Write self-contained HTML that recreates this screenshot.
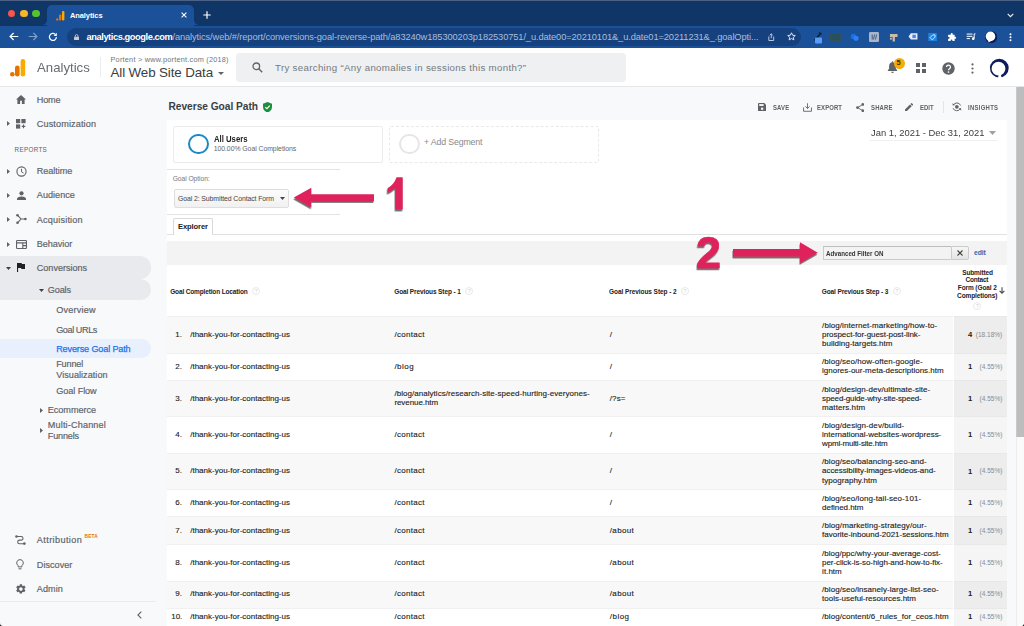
<!DOCTYPE html>
<html>
<head>
<meta charset="utf-8">
<title>Analytics</title>
<style>
*{box-sizing:border-box;margin:0;padding:0}
html,body{width:1024px;height:626px;overflow:hidden;background:#f8f9fa;font-family:"Liberation Sans",sans-serif;color:#222}
.abs,.abs-all *{position:absolute}
#root{position:relative;width:1024px;height:626px;overflow:hidden}
#root div,#root span,#root svg{position:absolute;white-space:nowrap}
.t{line-height:1;transform-origin:0 50%}
/* browser chrome */
#tabbar{left:0;top:0;width:1024px;height:26px;background:#103567}
#tab{left:47px;top:5px;width:147px;height:22px;background:#1b5198;border-radius:5px 5px 0 0}
#toolbar{left:0;top:25.500px;width:1024px;height:22.500px;background:#1b5198}
#urlpill{left:67px;top:28px;width:734px;height:18px;border-radius:9px;background:#15417e}
/* GA header */
#gahead{left:0;top:48px;width:1024px;height:39px;background:#fff;border-bottom:1px solid #e4e6e8}
#search{left:236px;top:53px;width:390px;height:29px;background:#eef0f2;border-radius:4px}
/* sidebar */
.nav{font-size:9.1px;color:#5f6368;margin-top:.8px;-webkit-text-stroke:.18px #5f6368}
/* content */
#panel{left:166.500px;top:120px;width:840.500px;height:520px;background:#fff}
.row{left:167px;width:840px}
.act{font-size:6.600px;font-weight:bold;color:#5f6368;transform:scaleX(.9)}
.cell{font-size:8px;color:#222;-webkit-text-stroke:.12px #222}
.th{font-size:6.500px;font-weight:bold;color:#222}
.pct{font-size:6.500px;color:#8a8a8a}
</style>
</head>
<body>
<div id="root">

<!-- ===== browser chrome ===== -->
<div id="tabbar"></div>
<div style="left:0;top:0;width:1024px;height:1px;background:#4b6286"></div>
<div id="tab"></div>
<svg style="left:42px;top:20px" width="5" height="5" viewBox="0 0 5 5"><path d="M5 0V5H0A5 5 0 0 0 5 0z" fill="#1b5198"/></svg><svg style="left:194px;top:20px" width="5" height="5" viewBox="0 0 5 5"><path d="M0 0V5H5A5 5 0 0 1 0 0z" fill="#1b5198"/></svg>
<div id="toolbar"></div>
<div id="urlpill"></div>
<!-- traffic lights -->
<div style="left:7.8px;top:9.6px;width:7.6px;height:7.6px;border-radius:50%;background:#f2564d"></div>
<div style="left:20px;top:9.6px;width:7.6px;height:7.6px;border-radius:50%;background:#f5b829"></div>
<div style="left:32.2px;top:9.6px;width:7.6px;height:7.6px;border-radius:50%;background:#55c22f"></div>
<!-- favicon -->
<svg style="left:56px;top:11px" width="9" height="10" viewBox="0 0 9 10"><rect x="6" y="0" width="2.4" height="9.6" rx="1" fill="#f9ab00"/><rect x="3" y="3.4" width="2.4" height="6.2" rx="1" fill="#e37400"/><circle cx="1.2" cy="8.4" r="1.2" fill="#e37400"/></svg>
<div class="t" style="left:70px;top:11.700px;font-size:7.500px;color:#fff;font-weight:bold;letter-spacing:-.1px">Analytics</div>
<svg style="left:181.300px;top:12px" width="6" height="6" viewBox="0 0 6 6"><path d="M.6.6l4.8 4.8M5.4.6L.6 5.4" stroke="#fff" stroke-width="1.1" fill="none"/></svg>
<svg style="left:203px;top:11px" width="8" height="8" viewBox="0 0 8 8"><path d="M4 .3v7.4M.3 4h7.4" stroke="#fff" stroke-width="1.2" fill="none"/></svg>
<svg style="left:1007px;top:13px" width="7" height="5" viewBox="0 0 7 5"><path d="M.7.8l2.8 2.8L6.3.8" stroke="#e8eef8" stroke-width="1.2" fill="none"/></svg>
<!-- nav buttons -->
<svg style="left:9px;top:32px" width="10" height="9" viewBox="0 0 10 9"><path d="M9.3 4.5H1.2M4.6 1L1.1 4.5 4.6 8" stroke="#fff" stroke-width="1.2" fill="none"/></svg>
<svg style="left:28px;top:32px" width="10" height="9" viewBox="0 0 10 9"><path d="M.7 4.5h8.1M5.4 1l3.5 3.5L5.4 8" stroke="#7f9fcc" stroke-width="1.2" fill="none"/></svg>
<svg style="left:48px;top:31.5px" width="10" height="10" viewBox="0 0 10 10"><path d="M8.4 5A3.5 3.5 0 1 1 7.3 2.4" stroke="#fff" stroke-width="1.25" fill="none"/><path d="M8.8.8v3.1H5.7z" fill="#fff"/></svg>
<!-- lock -->
<svg style="left:74px;top:33.600px" width="5.200" height="6.800" viewBox="0 0 6 8"><rect x="0" y="3.2" width="6" height="4.600" rx=".7" fill="#c6cad2"/><path d="M1.400 3.400V2.300a1.600 1.600 0 0 1 3.200 0v1.100" stroke="#c6cad2" stroke-width="1" fill="none"/></svg>
<div class="t" id="url" style="left:86.5px;top:32.5px;font-size:9.3px;color:#a9bddb;letter-spacing:-.11px"><span style="position:static;color:#fff;font-weight:bold;letter-spacing:-.43px">analytics.google.com</span>/analytics/web/#/report/conversions-goal-reverse-path/a83240w185300203p182530751/_u.date00=20210101&amp;_u.date01=20211231&amp;_.goalOpti...</div>
<!-- url bar right icons -->
<svg style="left:768px;top:32.500px" width="6.500" height="8.500" viewBox="0 0 8 10"><path d="M1 4v5h6V4M4 6.300V.9M2.200 2.500L4 .8l1.800 1.700" stroke="#c9d5e8" stroke-width="1.100" fill="none"/></svg>
<svg style="left:786.500px;top:32.300px" width="9" height="9" viewBox="0 0 10 10"><path d="M5 .9l1.250 2.700 2.950.3-2.200 2 .62 2.900L5 7.300 2.380 8.800 3 5.900.8 3.900l2.950-.3z" stroke="#dfe7f3" stroke-width="1.100" fill="none"/></svg>
<!-- extensions -->
<svg style="left:812px;top:31px" width="12" height="13" viewBox="0 0 12 13"><path d="M2 9l5-6 1.2 1L3.4 10z" fill="#0b1a33"/><path d="M7.2 1.6l2.2 1.9" stroke="#0b1a33" stroke-width="1.6"/><rect x="3" y="6.4" width="7" height="6" rx=".8" fill="#5b9bf8"/></svg>
<svg style="left:830px;top:33px" width="11" height="8" viewBox="0 0 11 8"><rect x=".6" y=".6" width="9.8" height="6.8" rx="1" stroke="#3a4f52" stroke-width="1.2" fill="#25525f"/></svg>
<svg style="left:849.500px;top:32.500px" width="9.500" height="8.500" viewBox="0 0 11 10"><circle cx="4" cy="4" r="3.200" fill="#1d6fe0"/><circle cx="7" cy="6.200" r="3" fill="#2a80f5"/></svg>
<svg style="left:869px;top:32px" width="10" height="10" viewBox="0 0 10 10"><rect width="10" height="10" rx="1.3" fill="#a9b6c9"/><path d="M3.2 2.5v5M5.6 2.5L4.4 7.5M7.6 2.5L6.4 7.5" stroke="#38557f" stroke-width=".9"/></svg>
<svg style="left:888.500px;top:32.500px" width="9.500" height="9.500" viewBox="0 0 10 10"><path d="M1 1h8v3.200H6.200V9H3.800V4.200H1z" fill="#c9bca6"/><rect x="1" y="5" width="2" height="2" fill="#c9bca6"/></svg>
<svg style="left:908px;top:33.200px" width="10" height="6.800" viewBox="0 0 11 8"><path d="M3 .3h7.700v7.400H3L.3 4z" fill="#e6eefc"/><rect x="4.800" y="2" width="4" height="4" fill="#4a86e0"/></svg>
<svg style="left:928px;top:32.600px" width="9.200" height="8.600" viewBox="0 0 10 10"><rect width="10" height="10" rx=".6" fill="#1e84e4"/><path d="M5.200 2.200h2.600v2.600L4.600 8 2 5.400z" stroke="#fff" stroke-width=".9" fill="none"/></svg>
<svg style="left:947px;top:32.700px" width="9.500" height="9" viewBox="0 0 10 10"><path d="M3.900 1.200a1.100 1.100 0 0 1 2.200 0V2H8.200v2.200h.6a1.100 1.100 0 0 1 0 2.200h-.6V9H5.800v-.7a1 1 0 0 0-2 0V9H1V6.400h.7a1 1 0 0 0 0-2H1V2h2.900z" fill="#fff"/></svg>
<svg style="left:966.300px;top:32.800px" width="10" height="7.500" viewBox="0 0 11 9"><path d="M.3 1.300h7M.3 4h7M.3 6.700h4" stroke="#fff" stroke-width="1.200"/><path d="M9.300 1v5.200" stroke="#fff" stroke-width="1.200"/><path d="M9.300 1h1.500" stroke="#fff" stroke-width="1.200"/><circle cx="8.200" cy="6.800" r="1.600" fill="#fff"/></svg>
<svg style="left:984.800px;top:31.300px" width="12.200" height="12.200" viewBox="0 0 12.200 12.200"><circle cx="6.100" cy="6.100" r="6.100" fill="#0d1d5c"/><circle cx="5.500" cy="5.400" r="4.800" fill="#fff"/><path d="M2 7.500L3.800 11.600 6.500 9.500z" fill="#fff"/></svg>
<svg style="left:1008.700px;top:32.500px" width="3" height="9" viewBox="0 0 3 9"><circle cx="1.500" cy="1.200" r="1" fill="#fff"/><circle cx="1.500" cy="4.200" r="1" fill="#fff"/><circle cx="1.500" cy="7.200" r="1" fill="#fff"/></svg>

<!-- ===== GA header ===== -->
<div id="gahead"></div>
<svg style="left:10px;top:59px" width="16" height="18" viewBox="0 0 16 18"><rect x="10.6" y="0" width="4.6" height="17.6" rx="2.3" fill="#f9ab00"/><rect x="5" y="6.4" width="4.6" height="11.2" rx="2.3" fill="#e37400"/><circle cx="2.3" cy="15.3" r="2.3" fill="#e37400"/></svg>
<div class="t" style="left:37.300px;top:61.800px;font-size:12.400px;color:#676c71;--sw:52.800px;transform:scaleX(1.0647)">Analytics</div>
<div style="left:99.500px;top:56.500px;width:1px;height:20.500px;background:#ebedef"></div>
<div class="t" style="left:110.5px;top:56px;font-size:7.3px;color:#70757a;letter-spacing:.23px">Portent &gt; www.portent.com (2018)</div>
<div class="t" style="left:110.5px;top:66px;font-size:13.4px;color:#3c4043;letter-spacing:-.13px">All Web Site Data</div>
<svg style="left:218px;top:72px" width="6" height="3" viewBox="0 0 6 3"><path d="M0 0h6L3 3z" fill="#5f6368"/></svg>
<div id="search"></div>
<svg style="left:252px;top:62px" width="11" height="11" viewBox="0 0 11 11"><circle cx="4.3" cy="4.3" r="3.3" stroke="#5f6368" stroke-width="1.3" fill="none"/><path d="M6.8 6.8l3.4 3.4" stroke="#5f6368" stroke-width="1.4"/></svg>
<div class="t" style="left:275px;top:62.5px;font-size:9.700px;color:#757a7f;letter-spacing:.32px">Try searching &ldquo;Any anomalies in sessions this month?&rdquo;</div>
<!-- right icons -->
<svg style="left:887px;top:61px" width="11" height="13" viewBox="0 0 11 13"><path d="M5.5 1.2c-2 0-3.4 1.5-3.4 3.6v3L.8 9.3v.7h9.4v-.7L8.9 7.8v-3c0-2.1-1.4-3.6-3.4-3.600z" fill="#5f6368"/><rect x="4.7" y=".2" width="1.6" height="1.6" rx=".8" fill="#5f6368"/><path d="M4.2 10.8a1.3 1.3 0 0 0 2.600 0z" fill="#5f6368"/></svg>
<div style="left:893.5px;top:57.5px;width:11px;height:11px;border-radius:50%;background:#f9ab00"></div>
<div class="t" style="left:896.4px;top:59.300px;font-size:7.400px;color:#3c2e00;font-weight:bold">5</div>
<svg style="left:916px;top:63px" width="10" height="10" viewBox="0 0 10 10"><rect x="0" y="0" width="4" height="4" fill="#5f6368"/><rect x="6" y="0" width="4" height="4" fill="#5f6368"/><rect x="0" y="6" width="4" height="4" fill="#5f6368"/><rect x="6" y="6" width="4" height="4" fill="#5f6368"/></svg>
<svg style="left:942px;top:61.500px" width="13" height="13" viewBox="0 0 13 13"><circle cx="6.5" cy="6.5" r="6.2" fill="#5f6368"/><path d="M4.500 5.100a2 2 0 1 1 3 1.700c-.7.400-1 .800-1 1.500" stroke="#fff" stroke-width="1.300" fill="none"/><circle cx="6.500" cy="10" r=".85" fill="#fff"/></svg>
<svg style="left:971px;top:62.500px" width="3" height="11" viewBox="0 0 3 11"><circle cx="1.5" cy="1.400" r="1.100" fill="#5f6368"/><circle cx="1.5" cy="5.500" r="1.100" fill="#5f6368"/><circle cx="1.5" cy="9.600" r="1.100" fill="#5f6368"/></svg>
<svg style="left:989px;top:57.500px" width="21" height="21" viewBox="0 0 21 21"><path fill-rule="evenodd" fill="#0d1d5c" d="M10.300 .700a9.400 9.400 0 1 1 0 18.800a9.400 9.400 0 1 1 0 -18.800zM9.500 3.800a6.900 6.900 0 1 0 0 13.800a6.900 6.900 0 1 0 0 -13.800z"/><path d="M10.600 12l-1.800 9h4.200z" fill="#fff"/></svg>

<!-- ===== sidebar ===== -->
<div style="left:0;top:256.300px;width:151px;height:22.700px;background:#e8eaed;border-radius:0 11.300px 11.300px 0"></div>
<div style="left:0;top:279px;width:151px;height:21px;background:#e8eaed;border-radius:0 10.500px 10.500px 0"></div>
<div style="left:0;top:339px;width:151px;height:18.500px;background:#e8f0fe;border-radius:0 9.250px 9.250px 0"></div>
<svg style="left:15.500px;top:94.500px" width="10" height="9" viewBox="0 0 10 9"><path d="M5 0L0 4.500h1.400V9h2.700V5.800h1.800V9h2.700V4.500H10z" fill="#5f6368"/></svg>
<div class="t nav" style="left:36.8px;top:95.050px;--w:23.8px;letter-spacing:-0.155px">Home</div>
<svg style="left:6.800000000000001px;top:121.1px" width="3" height="5" viewBox="0 0 3 5"><path d="M0 0l3 2.500L0 5z" fill="#5f6368"/></svg>
<svg style="left:16px;top:119px" width="10" height="10" viewBox="0 0 10 10"><rect x="0" y="0" width="4.200" height="4.200" fill="#5f6368"/><rect x="5.400" y="0" width="4.200" height="4.200" fill="#5f6368"/><rect x="0" y="5.400" width="4.200" height="4.200" fill="#5f6368"/><path d="M7.500 5.600v3.600M5.700 7.400h3.600" stroke="#5f6368" stroke-width="1.100"/></svg>
<div class="t nav" style="left:36.8px;top:118.85px;--w:59.2px;letter-spacing:0.131px">Customization</div>
<div class="t" style="left:14.600px;top:146.600px;font-size:6.300px;color:#5f6368;--w:32.200px;letter-spacing:0.312px">REPORTS</div>
<svg style="left:6.800000000000001px;top:168.5px" width="3" height="5" viewBox="0 0 3 5"><path d="M0 0l3 2.500L0 5z" fill="#5f6368"/></svg>
<svg style="left:15.500px;top:165.800px" width="11" height="11" viewBox="0 0 11 11"><circle cx="5.500" cy="5.500" r="4.600" stroke="#5f6368" stroke-width="1.100" fill="none"/><path d="M5.500 2.800v3l2 1.200" stroke="#5f6368" stroke-width="1" fill="none"/></svg>
<div class="t nav" style="left:36.8px;top:166.25px;--w:35.6px;letter-spacing:-0.042px">Realtime</div>
<svg style="left:6.800000000000001px;top:192.7px" width="3" height="5" viewBox="0 0 3 5"><path d="M0 0l3 2.500L0 5z" fill="#5f6368"/></svg>
<svg style="left:16.500px;top:190.500px" width="9" height="9" viewBox="0 0 9 9"><circle cx="4.500" cy="2.300" r="2.100" fill="#5f6368"/><path d="M0 9V7.600C0 6.200 3 5.400 4.500 5.400S9 6.200 9 7.600V9z" fill="#5f6368"/></svg>
<div class="t nav" style="left:36.8px;top:190.45px;--w:38.1px;letter-spacing:0.025px">Audience</div>
<svg style="left:6.800000000000001px;top:217.0px" width="3" height="5" viewBox="0 0 3 5"><path d="M0 0l3 2.500L0 5z" fill="#5f6368"/></svg>
<svg style="left:15.500px;top:214.300px" width="11" height="10" viewBox="0 0 11 10"><path d="M1.500 1.200L5 5 1.500 8.800M5 5h4.500" stroke="#5f6368" stroke-width="1.100" fill="none"/><circle cx="1.500" cy="1.300" r="1.300" fill="#5f6368"/><circle cx="1.500" cy="8.700" r="1.300" fill="#5f6368"/><circle cx="9.400" cy="5" r="1.300" fill="#5f6368"/></svg>
<div class="t nav" style="left:36.8px;top:214.75px;--w:45.8px;letter-spacing:0.182px">Acquisition</div>
<svg style="left:6.800000000000001px;top:241.5px" width="3" height="5" viewBox="0 0 3 5"><path d="M0 0l3 2.500L0 5z" fill="#5f6368"/></svg>
<svg style="left:15.500px;top:239.500px" width="11" height="9" viewBox="0 0 11 9"><rect x=".55" y=".55" width="9.900" height="7.900" rx=".8" stroke="#5f6368" stroke-width="1.100" fill="none"/><path d="M.5 2.900h10M6.800 2.900v5.600M6.800 5.600h3.700" stroke="#5f6368" stroke-width="1.100"/></svg>
<div class="t nav" style="left:36.8px;top:239.25px;--w:35.5px;letter-spacing:-0.058px">Behavior</div>
<svg style="left:5.800000000000001px;top:266.5px" width="5" height="3" viewBox="0 0 5 3"><path d="M0 0h5L2.500 3z" fill="#3c4043"/></svg>
<svg style="left:17px;top:263.300px" width="8" height="9" viewBox="0 0 8 9"><path d="M0 0h4.600l.3.900H8v5H4.400l-.3-.9H1.100V9H0z" fill="#202124"/></svg>
<div class="t nav" style="left:36.8px;top:263.25px;--w:50.3px;letter-spacing:-0.025px">Conversions</div>
<svg style="left:39.0px;top:289.0px" width="5" height="3" viewBox="0 0 5 3"><path d="M0 0h5L2.500 3z" fill="#3c4043"/></svg>
<div class="t nav" style="left:47.8px;top:285.55px;--w:23.2px;letter-spacing:-0.141px">Goals</div>
<div class="t nav" style="left:56.2px;top:305.05px;--w:39.4px;letter-spacing:0.213px">Overview</div>
<div class="t nav" style="left:56.2px;top:324.75px;--w:41.2px;letter-spacing:-0.411px">Goal URLs</div>
<div class="t nav" style="left:56.2px;top:343.85px;color:#1a73e8;-webkit-text-stroke:.25px #1a73e8;--w:74.5px;letter-spacing:-0.146px">Reverse Goal Path</div>
<div class="t nav" style="left:56.2px;top:359.55px;--w:27.1px;letter-spacing:-0.142px">Funnel</div>
<div class="t nav" style="left:56.2px;top:370.15px;--w:51.4px;letter-spacing:0.042px">Visualization</div>
<div class="t nav" style="left:56.2px;top:385.85px;--w:40.5px;letter-spacing:-0.055px">Goal Flow</div>
<svg style="left:40.0px;top:407.5px" width="3" height="5" viewBox="0 0 3 5"><path d="M0 0l3 2.500L0 5z" fill="#5f6368"/></svg>
<div class="t nav" style="left:47.8px;top:405.25px;--w:48.2px;letter-spacing:-0.039px">Ecommerce</div>
<svg style="left:40.0px;top:428.0px" width="3" height="5" viewBox="0 0 3 5"><path d="M0 0l3 2.500L0 5z" fill="#5f6368"/></svg>
<div class="t nav" style="left:47.8px;top:420.25px;--w:58px;letter-spacing:0.158px">Multi-Channel</div>
<div class="t nav" style="left:47.8px;top:430.95px;--w:31.3px;letter-spacing:-0.177px">Funnels</div>
<svg style="left:14.500px;top:535px" width="11" height="10" viewBox="0 0 11 10"><path d="M1.600 1.500h4.600a1.800 1.800 0 0 1 0 3.600H4.500a1.800 1.800 0 0 0 0 3.600h4.600" stroke="#5f6368" stroke-width="1.100" fill="none"/><circle cx="1.500" cy="1.500" r="1.300" fill="#5f6368"/><circle cx="9.400" cy="8.600" r="1.300" fill="#5f6368"/></svg>
<div class="t nav" style="left:36.8px;top:535.05px;--w:45px;letter-spacing:0.405px">Attribution</div>
<div class="t" style="left:84.500px;top:534.800px;font-size:4.800px;color:#e8710a;font-weight:bold;letter-spacing:.2px">BETA</div>
<svg style="left:16px;top:559px" width="8" height="11" viewBox="0 0 8 11"><path d="M4 .6a3.300 3.300 0 0 0-1.900 6v1.300h3.800V6.600A3.300 3.300 0 0 0 4 .600z" stroke="#5f6368" stroke-width="1" fill="none"/><path d="M2.500 9.800h3" stroke="#5f6368" stroke-width="1"/></svg>
<div class="t nav" style="left:36.8px;top:559.95px;--w:35.5px;letter-spacing:0.018px">Discover</div>
<svg style="left:14.800px;top:583.200px" width="11.800" height="11.800" viewBox="0 0 24 24"><path fill="#5f6368" d="M19.140 12.940c.04-.3.060-.61.060-.94 0-.32-.02-.64-.07-.94l2.030-1.580a.49.49 0 0 0 .12-.61l-1.920-3.320a.488.488 0 0 0-.59-.22l-2.390.96c-.5-.38-1.030-.7-1.620-.94l-.36-2.540a.484.484 0 0 0-.48-.41h-3.840c-.24 0-.43.170-.47.410l-.36 2.540c-.59.240-1.130.57-1.620.94l-2.390-.96c-.22-.08-.47 0-.59.220L2.740 8.870c-.12.210-.8.470.12.610l2.030 1.580c-.5.300-.9.630-.9.940s.2.640.7.940l-2.030 1.580a.49.49 0 0 0-.12.610l1.920 3.320c.12.220.37.290.59.220l2.390-.96c.5.380 1.030.7 1.620.94l.36 2.540c.5.240.24.410.48.410h3.840c.24 0 .44-.17.470-.41l.36-2.540c.59-.24 1.130-.56 1.620-.94l2.390.96c.22.080.47 0 .59-.22l1.920-3.320c.12-.22.070-.47-.12-.61l-2.010-1.580zM12 15.600c-1.980 0-3.600-1.620-3.600-3.600s1.620-3.600 3.600-3.600 3.600 1.620 3.600 3.600-1.620 3.600-3.600 3.600z"/></svg>
<div class="t nav" style="left:36.8px;top:584.15px;--w:26px;letter-spacing:0.055px">Admin</div>
<div style="left:0;top:601px;width:156px;height:1px;background:#e9ebee"></div>
<svg style="left:137px;top:610.500px" width="5" height="8" viewBox="0 0 5 8"><path d="M4.300.6L.9 4l3.400 3.400" stroke="#5f6368" stroke-width="1.100" fill="none"/></svg>

<!-- ===== content ===== -->
<div class="t" style="left:168.500px;top:101.700px;font-size:10.200px;font-weight:bold;color:#3c4043;--w:89.500px;letter-spacing:-0.033px">Reverse Goal Path</div>
<svg style="left:262.500px;top:101.500px" width="9" height="10.500" viewBox="0 0 9 10.500"><path d="M4.500 0L0 1.800v3.300c0 2.600 1.900 4.600 4.500 5.400C7.100 9.700 9 7.700 9 5.100V1.800z" fill="#1e8e3e"/><path d="M2.300 5.200l1.600 1.500 2.900-3" stroke="#fff" stroke-width="1.100" fill="none"/></svg>
<!-- action bar -->
<svg style="left:757.500px;top:103.200px" width="8.300" height="8.300" viewBox="0 0 9 9"><path d="M0 .9C0 .4.400 0 .9 0h6L9 2.100v6c0 .500-.4.900-.9.900H.9C.4 9 0 8.600 0 8.100z" fill="#5f6368"/><rect x="1.300" y="1.200" width="4.800" height="2" fill="#f8f9fa"/><circle cx="4.500" cy="6.200" r="1.350" fill="#f8f9fa"/></svg>
<div class="t act" style="left:772.800px;top:104.600px;--w:16.200px;letter-spacing:0.177px">SAVE</div>
<svg style="left:802.500px;top:102.500px" width="9" height="9" viewBox="0 0 10 10"><path d="M5 .3v5.600M2.700 3.800L5 6.100l2.300-2.300M.6 5v4.200h8.800V5" stroke="#5f6368" stroke-width="1" fill="none"/></svg>
<div class="t act" style="left:817px;top:104.600px;--w:25px;letter-spacing:0.131px">EXPORT</div>
<svg style="left:856px;top:102.500px" width="8.300" height="9.200" viewBox="0 0 9 10"><path d="M7.300 1.700L1.700 5l5.600 3.300" stroke="#5f6368" stroke-width="1" fill="none"/><circle cx="7.400" cy="1.600" r="1.500" fill="#5f6368"/><circle cx="1.600" cy="5" r="1.500" fill="#5f6368"/><circle cx="7.400" cy="8.400" r="1.500" fill="#5f6368"/></svg>
<div class="t act" style="left:870.500px;top:104.600px;--w:21.500px;letter-spacing:0.199px">SHARE</div>
<svg style="left:905px;top:103.200px" width="8.200" height="8.200" viewBox="0 0 9 9"><path d="M0 7.100V9h1.900l5.500-5.500-1.900-1.900zM8.800 2.100a.5.500 0 0 0 0-.7L7.600.2a.5.500 0 0 0-.7 0l-.9.900 1.900 1.900z" fill="#5f6368"/></svg>
<div class="t act" style="left:920px;top:104.600px;--w:13.600px;letter-spacing:0.027px">EDIT</div>
<div style="left:943px;top:100.500px;width:1px;height:12px;background:#e3e5e8"></div>
<svg style="left:952px;top:102px" width="9.700" height="9.700" viewBox="0 0 10 10"><path d="M1.300 3.200A4.200 4.200 0 0 1 8.900 3.600M8.700 6.800A4.200 4.200 0 0 1 1.100 6.400" stroke="#5f6368" stroke-width="1" fill="none"/><path d="M.3 1.200l.6 2.500 2.400-.7zM9.700 8.800l-.6-2.500-2.400.7z" fill="#5f6368"/><circle cx="5" cy="5" r="1.900" fill="#5f6368"/></svg>
<div class="t act" style="left:968px;top:104.600px;--w:30px;letter-spacing:0.313px">INSIGHTS</div>

<div id="panel"></div>
<!-- date range -->
<div class="t" style="left:871px;top:127.600px;font-size:9.900px;color:#3c4043;--sw:113.400px;transform:scaleX(0.9518)">Jan 1, 2021 - Dec 31, 2021</div>
<svg style="left:988.500px;top:131px" width="7" height="4" viewBox="0 0 7 4"><path d="M0 0h7L3.500 4z" fill="#9aa0a6"/></svg>
<div style="left:870px;top:140px;width:128px;height:1px;background:#f0f0f0"></div>
<!-- segments -->
<div style="left:172.500px;top:125.500px;width:210px;height:37px;background:#fff;border:1px solid #ececec;border-radius:2px"></div>
<div style="left:188px;top:133.800px;width:20.500px;height:20.500px;border-radius:50%;border:2.600px solid #1888c8"></div>
<div class="t" style="left:213.700px;top:135.400px;font-size:9.300px;font-weight:bold;color:#222;--sw:33.500px;transform:scaleX(0.8310)">All Users</div>
<div class="t" style="left:213.700px;top:145.700px;font-size:6.900px;color:#666;--w:82.500px;letter-spacing:-0.060px">100.00% Goal Completions</div>
<div style="left:388.500px;top:125.500px;width:210px;height:37px;background:#fff;border:1px dashed #e9e9e9;border-radius:2px"></div>
<div style="left:399px;top:133.800px;width:20.500px;height:20.500px;border-radius:50%;border:2px solid #e6e6e6"></div>
<div class="t" style="left:424px;top:137.700px;font-size:8.800px;color:#8a8a8a;--w:58.500px;letter-spacing:-0.159px">+ Add Segment</div>
<!-- goal option -->
<div style="left:166.500px;top:169.300px;width:173px;height:1px;background:#e4e4e4"></div>
<div class="t" style="left:172.700px;top:175.500px;font-size:6.700px;color:#777;--w:37px;letter-spacing:-0.050px">Goal Option:</div>
<div style="left:173.500px;top:189.300px;width:115.500px;height:18.300px;background:linear-gradient(#fcfcfc,#f1f1f1);border:1px solid #dedede;border-radius:2px"></div>
<div class="t" style="left:178px;top:195.700px;font-size:6.900px;color:#444;--w:96px;letter-spacing:-0.097px">Goal 2: Submitted Contact Form</div>
<svg style="left:279.500px;top:197px" width="5" height="3" viewBox="0 0 5 3"><path d="M0 0h5L2.500 3z" fill="#444"/></svg>
<div style="left:166.500px;top:214px;width:173px;height:1px;background:#e4e4e4"></div>
<!-- tabs -->
<div style="left:166.500px;top:234.400px;width:840px;height:1px;background:#e1e1e1"></div>
<div style="left:172.500px;top:218px;width:40.500px;height:17.300px;background:#fff;border:1px solid #d9d9d9;border-bottom:none;border-radius:2px 2px 0 0"></div>
<div class="t" style="left:178px;top:222.500px;font-size:7.600px;font-weight:bold;color:#222;--w:30px;letter-spacing:-0.116px">Explorer</div>
<!-- filter bar -->
<div style="left:166.500px;top:241.300px;width:840px;height:23.300px;background:#f3f3f3"></div>
<div style="left:822.500px;top:246.200px;width:128.500px;height:13.500px;background:#f3f3f3;border:1px solid #cbcbcb;border-top-color:#bdbdbd;border-right:none"></div>
<div class="t" style="left:826.300px;top:249.500px;font-size:7px;font-weight:bold;color:#333;--sw:57.500px;transform:scaleX(0.8850)">Advanced Filter ON</div>
<div style="left:950.500px;top:246.200px;width:18px;height:13.500px;background:linear-gradient(#f6f6f6,#e4e4e4);border:1px solid #cbcbcb;border-radius:0 2px 2px 0"></div>
<svg style="left:956.500px;top:250.200px" width="6" height="6" viewBox="0 0 6 6"><path d="M.5.500l5 5M5.500.5l-5 5" stroke="#444" stroke-width="1.100"/></svg>
<div class="t" style="left:974px;top:249.500px;font-size:6.800px;font-weight:bold;color:#1c6cb8;--w:11.800px;letter-spacing:-0.098px">edit</div>

<!-- ===== table ===== -->
<div class="t th" style="left:170.2px;top:289px;--w:77.5px;letter-spacing:-0.147px">Goal Completion Location</div>
<div style="left:252.0px;top:287.3px;width:8px;height:8px;border-radius:50%;border:1px solid #e9e9e9"></div><div class="t" style="left:254.7px;top:288.70px;font-size:5px;color:#cfcfcf">?</div>
<div class="t th" style="left:394.2px;top:289px;--w:66.6px;letter-spacing:-0.114px">Goal Previous Step - 1</div>
<div style="left:465.4px;top:287.3px;width:8px;height:8px;border-radius:50%;border:1px solid #e9e9e9"></div><div class="t" style="left:468.1px;top:288.70px;font-size:5px;color:#cfcfcf">?</div>
<div class="t th" style="left:609.1px;top:289px;--w:67.5px;letter-spacing:-0.071px">Goal Previous Step - 2</div>
<div style="left:680.9px;top:287.3px;width:8px;height:8px;border-radius:50%;border:1px solid #e9e9e9"></div><div class="t" style="left:683.6px;top:288.70px;font-size:5px;color:#cfcfcf">?</div>
<div class="t th" style="left:821.8px;top:289px;--w:66.5px;letter-spacing:-0.119px">Goal Previous Step - 3</div>
<div style="left:892.7px;top:287.3px;width:8px;height:8px;border-radius:50%;border:1px solid #e9e9e9"></div><div class="t" style="left:895.4px;top:288.70px;font-size:5px;color:#cfcfcf">?</div>
<div class="t th" style="left:962.2px;top:269.5px;--w:30.8px;letter-spacing:-0.123px">Submitted</div>
<div class="t th" style="left:965.5px;top:277.4px;--w:23px;letter-spacing:-0.201px">Contact</div>
<div class="t th" style="left:957.8px;top:285.4px;--w:39px;letter-spacing:-0.099px">Form (Goal 2</div>
<div class="t th" style="left:957.1px;top:293.4px;--w:40.3px;letter-spacing:-0.112px">Completions)</div>
<div style="left:973.3px;top:302.3px;width:8px;height:8px;border-radius:50%;border:1px solid #e9e9e9"></div><div class="t" style="left:976.0px;top:303.70px;font-size:5px;color:#cfcfcf">?</div>
<svg style="left:999px;top:287px" width="6" height="7" viewBox="0 0 6 7"><path d="M3 .3v5.800M.6 3.800L3 6.200l2.400-2.400" stroke="#4a4a4a" stroke-width="1.100" fill="none"/></svg>
<div style="left:166.500px;top:315.5px;width:786.500px;height:37.4px;background:#f8f8f8;border-top:1px solid #f0f0f0"></div><div style="left:953.500px;top:315.5px;width:53.500px;height:37.4px;background:#ededed;border-top:1px solid #e8e8e8"></div>
<div class="t cell" style="left:175.300px;top:330.80px;">1.</div>
<div class="t cell" style="left:190.2px;top:330.80px;--w:99.8px;letter-spacing:0.007px">/thank-you-for-contacting-us</div>
<div class="t cell" style="left:394.4px;top:330.80px;--w:30.2px;letter-spacing:0.312px">/contact</div>
<div class="t cell" style="left:609.800px;top:330.80px">/</div>
<div class="t cell" style="left:822.1px;top:321.75px;--w:115.1px;letter-spacing:0.069px">/blog/internet-marketing/how-to-</div>
<div class="t cell" style="left:822.1px;top:330.80px;--w:98.4px;letter-spacing:-0.059px">prospect-for-guest-post-link-</div>
<div class="t cell" style="left:822.1px;top:339.85px;--w:70.3px;letter-spacing:0.002px">building-targets.htm</div>
<div class="t" style="left:968px;top:330.90px;font-size:7.600px;font-weight:bold;color:#222">4</div><div class="t pct" style="left:975.700px;top:331.80px;--w:26.600px;letter-spacing:0.032px">(18.18%)</div>
<div style="left:166.500px;top:352.9px;width:786.500px;height:26.8px;background:#ffffff;border-top:1px solid #f0f0f0"></div><div style="left:953.500px;top:352.9px;width:53.500px;height:26.8px;background:#f5f5f5;border-top:1px solid #e8e8e8"></div>
<div class="t cell" style="left:175.300px;top:362.90px;">2.</div>
<div class="t cell" style="left:190.2px;top:362.90px;--w:99.8px;letter-spacing:0.007px">/thank-you-for-contacting-us</div>
<div class="t cell" style="left:394.4px;top:362.90px;--w:19.2px;letter-spacing:0.460px">/blog</div>
<div class="t cell" style="left:609.800px;top:362.90px">/</div>
<div class="t cell" style="left:822.1px;top:358.37px;--w:100.5px;letter-spacing:0.050px">/blog/seo/how-often-google-</div>
<div class="t cell" style="left:822.1px;top:367.42px;--w:121.5px;letter-spacing:-0.010px">ignores-our-meta-descriptions.htm</div>
<div class="t" style="left:968px;top:363.00px;font-size:7.600px;font-weight:bold;color:#222">1</div><div class="t pct" style="left:979.500px;top:363.90px;--w:23px;letter-spacing:0.039px">(4.55%)</div>
<div style="left:166.500px;top:379.7px;width:786.500px;height:36.7px;background:#f8f8f8;border-top:1px solid #f0f0f0"></div><div style="left:953.500px;top:379.7px;width:53.500px;height:36.7px;background:#ededed;border-top:1px solid #e8e8e8"></div>
<div class="t cell" style="left:175.300px;top:394.65px;">3.</div>
<div class="t cell" style="left:190.2px;top:394.65px;--w:99.8px;letter-spacing:0.007px">/thank-you-for-contacting-us</div>
<div class="t cell" style="left:394.4px;top:390.12px;--w:195.3px;letter-spacing:0.044px">/blog/analytics/research-site-speed-hurting-everyones-</div>
<div class="t cell" style="left:394.4px;top:399.17px;--w:43.7px;letter-spacing:-0.077px">revenue.htm</div>
<div class="t cell" style="left:609.8px;top:394.65px;--w:15.6px;letter-spacing:0.085px">/?s=</div>
<div class="t cell" style="left:822.1px;top:385.60px;--w:108.2px;letter-spacing:0.049px">/blog/design-dev/ultimate-site-</div>
<div class="t cell" style="left:822.1px;top:394.65px;--w:99.7px;letter-spacing:-0.134px">speed-guide-why-site-speed-</div>
<div class="t cell" style="left:822.1px;top:403.70px;--w:43px;letter-spacing:0.077px">matters.htm</div>
<div class="t" style="left:968px;top:394.75px;font-size:7.600px;font-weight:bold;color:#222">1</div><div class="t pct" style="left:979.500px;top:395.65px;--w:23px;letter-spacing:0.039px">(4.55%)</div>
<div style="left:166.500px;top:416.4px;width:786.500px;height:36.3px;background:#ffffff;border-top:1px solid #f0f0f0"></div><div style="left:953.500px;top:416.4px;width:53.500px;height:36.3px;background:#f5f5f5;border-top:1px solid #e8e8e8"></div>
<div class="t cell" style="left:175.300px;top:431.15px;">4.</div>
<div class="t cell" style="left:190.2px;top:431.15px;--w:99.8px;letter-spacing:0.007px">/thank-you-for-contacting-us</div>
<div class="t cell" style="left:394.4px;top:431.15px;--w:30.2px;letter-spacing:0.312px">/contact</div>
<div class="t cell" style="left:609.800px;top:431.15px">/</div>
<div class="t cell" style="left:822.1px;top:422.10px;--w:82.1px;letter-spacing:0.073px">/blog/design-dev/build-</div>
<div class="t cell" style="left:822.1px;top:431.15px;--w:119.2px;letter-spacing:-0.013px">international-websites-wordpress-</div>
<div class="t cell" style="left:822.1px;top:440.20px;--w:65.5px;letter-spacing:-0.189px">wpml-multi-site.htm</div>
<div class="t" style="left:968px;top:431.25px;font-size:7.600px;font-weight:bold;color:#222">1</div><div class="t pct" style="left:979.500px;top:432.15px;--w:23px;letter-spacing:0.039px">(4.55%)</div>
<div style="left:166.500px;top:452.7px;width:786.500px;height:36.3px;background:#f8f8f8;border-top:1px solid #f0f0f0"></div><div style="left:953.500px;top:452.7px;width:53.500px;height:36.3px;background:#ededed;border-top:1px solid #e8e8e8"></div>
<div class="t cell" style="left:175.300px;top:467.45px;">5.</div>
<div class="t cell" style="left:190.2px;top:467.45px;--w:99.8px;letter-spacing:0.007px">/thank-you-for-contacting-us</div>
<div class="t cell" style="left:394.4px;top:467.45px;--w:30.2px;letter-spacing:0.312px">/contact</div>
<div class="t cell" style="left:609.800px;top:467.45px">/</div>
<div class="t cell" style="left:822.1px;top:458.40px;--w:104.6px;letter-spacing:0.052px">/blog/seo/balancing-seo-and-</div>
<div class="t cell" style="left:822.1px;top:467.45px;--w:113.6px;letter-spacing:-0.065px">accessibility-images-videos-and-</div>
<div class="t cell" style="left:822.1px;top:476.50px;--w:54.8px;letter-spacing:0.019px">typography.htm</div>
<div class="t" style="left:968px;top:467.55px;font-size:7.600px;font-weight:bold;color:#222">1</div><div class="t pct" style="left:979.500px;top:468.45px;--w:23px;letter-spacing:0.039px">(4.55%)</div>
<div style="left:166.500px;top:489.0px;width:786.500px;height:27.4px;background:#ffffff;border-top:1px solid #f0f0f0"></div><div style="left:953.500px;top:489.0px;width:53.500px;height:27.4px;background:#f5f5f5;border-top:1px solid #e8e8e8"></div>
<div class="t cell" style="left:175.300px;top:499.30px;">6.</div>
<div class="t cell" style="left:190.2px;top:499.30px;--w:99.8px;letter-spacing:0.007px">/thank-you-for-contacting-us</div>
<div class="t cell" style="left:394.4px;top:499.30px;--w:30.2px;letter-spacing:0.312px">/contact</div>
<div class="t cell" style="left:609.800px;top:499.30px">/</div>
<div class="t cell" style="left:822.1px;top:494.77px;--w:99px;letter-spacing:0.076px">/blog/seo/long-tail-seo-101-</div>
<div class="t cell" style="left:822.1px;top:503.82px;--w:41.3px;letter-spacing:-0.051px">defined.htm</div>
<div class="t" style="left:968px;top:499.40px;font-size:7.600px;font-weight:bold;color:#222">1</div><div class="t pct" style="left:979.500px;top:500.30px;--w:23px;letter-spacing:0.039px">(4.55%)</div>
<div style="left:166.500px;top:516.4px;width:786.500px;height:27.7px;background:#f8f8f8;border-top:1px solid #f0f0f0"></div><div style="left:953.500px;top:516.4px;width:53.500px;height:27.7px;background:#ededed;border-top:1px solid #e8e8e8"></div>
<div class="t cell" style="left:175.300px;top:526.85px;">7.</div>
<div class="t cell" style="left:190.2px;top:526.85px;--w:99.8px;letter-spacing:0.007px">/thank-you-for-contacting-us</div>
<div class="t cell" style="left:394.4px;top:526.85px;--w:30.2px;letter-spacing:0.312px">/contact</div>
<div class="t cell" style="left:609.8px;top:526.85px;--w:24px;letter-spacing:0.350px">/about</div>
<div class="t cell" style="left:822.1px;top:522.33px;--w:104.6px;letter-spacing:0.083px">/blog/marketing-strategy/our-</div>
<div class="t cell" style="left:822.1px;top:531.38px;--w:126.5px;letter-spacing:-0.021px">favorite-inbound-2021-sessions.htm</div>
<div class="t" style="left:968px;top:526.95px;font-size:7.600px;font-weight:bold;color:#222">1</div><div class="t pct" style="left:979.500px;top:527.85px;--w:23px;letter-spacing:0.039px">(4.55%)</div>
<div style="left:166.500px;top:544.1px;width:786.500px;height:36.5px;background:#ffffff;border-top:1px solid #f0f0f0"></div><div style="left:953.500px;top:544.1px;width:53.500px;height:36.5px;background:#f5f5f5;border-top:1px solid #e8e8e8"></div>
<div class="t cell" style="left:175.300px;top:558.95px;">8.</div>
<div class="t cell" style="left:190.2px;top:558.95px;--w:99.8px;letter-spacing:0.007px">/thank-you-for-contacting-us</div>
<div class="t cell" style="left:394.4px;top:558.95px;--w:30.2px;letter-spacing:0.312px">/contact</div>
<div class="t cell" style="left:609.8px;top:558.95px;--w:24px;letter-spacing:0.350px">/about</div>
<div class="t cell" style="left:822.1px;top:549.90px;--w:118.7px;letter-spacing:-0.001px">/blog/ppc/why-your-average-cost-</div>
<div class="t cell" style="left:822.1px;top:558.95px;--w:120.6px;letter-spacing:-0.073px">per-click-is-so-high-and-how-to-fix-</div>
<div class="t cell" style="left:822.1px;top:568.00px;--w:19.7px;letter-spacing:0.027px">it.htm</div>
<div class="t" style="left:968px;top:559.05px;font-size:7.600px;font-weight:bold;color:#222">1</div><div class="t pct" style="left:979.500px;top:559.95px;--w:23px;letter-spacing:0.039px">(4.55%)</div>
<div style="left:166.500px;top:580.6px;width:786.500px;height:27.7px;background:#f8f8f8;border-top:1px solid #f0f0f0"></div><div style="left:953.500px;top:580.6px;width:53.500px;height:27.7px;background:#ededed;border-top:1px solid #e8e8e8"></div>
<div class="t cell" style="left:175.300px;top:590.25px;">9.</div>
<div class="t cell" style="left:190.2px;top:590.25px;--w:99.8px;letter-spacing:0.007px">/thank-you-for-contacting-us</div>
<div class="t cell" style="left:394.4px;top:590.25px;--w:30.2px;letter-spacing:0.312px">/contact</div>
<div class="t cell" style="left:609.8px;top:590.25px;--w:24px;letter-spacing:0.350px">/about</div>
<div class="t cell" style="left:822.1px;top:585.73px;--w:116.7px;letter-spacing:0.046px">/blog/seo/insanely-large-list-seo-</div>
<div class="t cell" style="left:822.1px;top:594.78px;--w:93.9px;letter-spacing:-0.015px">tools-useful-resources.htm</div>
<div class="t" style="left:968px;top:590.35px;font-size:7.600px;font-weight:bold;color:#222">1</div><div class="t pct" style="left:979.500px;top:591.25px;--w:23px;letter-spacing:0.039px">(4.55%)</div>
<div style="left:166.500px;top:608.3px;width:786.500px;height:31.2px;background:#ffffff;border-top:1px solid #f0f0f0"></div><div style="left:953.500px;top:608.3px;width:53.500px;height:31.2px;background:#f5f5f5;border-top:1px solid #e8e8e8"></div>
<div class="t cell" style="left:171.200px;top:612.90px;">10.</div>
<div class="t cell" style="left:190.2px;top:612.90px;--w:99.8px;letter-spacing:0.007px">/thank-you-for-contacting-us</div>
<div class="t cell" style="left:394.4px;top:612.90px;--w:30.2px;letter-spacing:0.312px">/contact</div>
<div class="t cell" style="left:609.8px;top:612.90px;--w:19.2px;letter-spacing:0.460px">/blog</div>
<div class="t cell" style="left:822.1px;top:612.90px;--w:126.5px;letter-spacing:0.046px">/blog/content/6_rules_for_ceos.htm</div>
<div class="t" style="left:968px;top:613.00px;font-size:7.600px;font-weight:bold;color:#222">1</div><div class="t pct" style="left:979.500px;top:613.90px;--w:23px;letter-spacing:0.039px">(4.55%)</div>

<!-- ===== annotations ===== -->
<svg style="left:280px;top:170px;overflow:visible" width="140" height="50" viewBox="280 170 140 50">
<defs><filter id="sh" x="-10%" y="-10%" width="120%" height="130%"><feDropShadow dx="-.5" dy="1.800" stdDeviation=".5" flood-color="#333" flood-opacity=".75"/></filter></defs>
<path filter="url(#sh)" fill="#e0215c" d="M293.800 197.500L311.300 187.700V194.200H374V201H311.300V207.500z"/>
<path filter="url(#sh)" fill="#e0215c" d="M402.700 209.600H395.200V188.100Q391.800 191.100 387.500 192.900V188.200Q390.500 186.900 393 183.800Q395.600 180.800 396.600 177.300H402.700z"/>
</svg>
<svg style="left:690px;top:230px;overflow:visible" width="140" height="50" viewBox="690 230 140 50">
<path filter="url(#sh)" fill="#e0215c" d="M817.800 252.700L800 242.300V249.100H733V256.600H800V262.900z"/>
<text filter="url(#sh)" x="696" y="268.200" font-family="Liberation Sans" font-weight="bold" font-size="45" fill="#e0215c" stroke="#e0215c" stroke-width=".7">2</text>
</svg>
<!-- ===== scrollbar ===== -->
<div style="left:1007.500px;top:87px;width:17px;height:540px;background:#f8f9fa"></div>
<div style="left:1016px;top:87px;width:8px;height:540px;background:#fafafa;border-left:1px solid #ededed"></div>
<div style="left:1016px;top:87px;width:8px;height:350px;background:#bdbdbd;border-left:1px solid #c9c9c9"></div>
<svg style="left:1019.500px;top:621.500px" width="4.500" height="4.500" viewBox="0 0 3 3"><path d="M3 0V3H0A3 3 0 0 0 3 0z" fill="#1a1a1a"/></svg>
<svg style="left:0;top:623px" width="3" height="3" viewBox="0 0 3 3"><path d="M0 0V3H3A3 3 0 0 1 0 0z" fill="#1a1a1a"/></svg>

</div>
</body>
</html>
